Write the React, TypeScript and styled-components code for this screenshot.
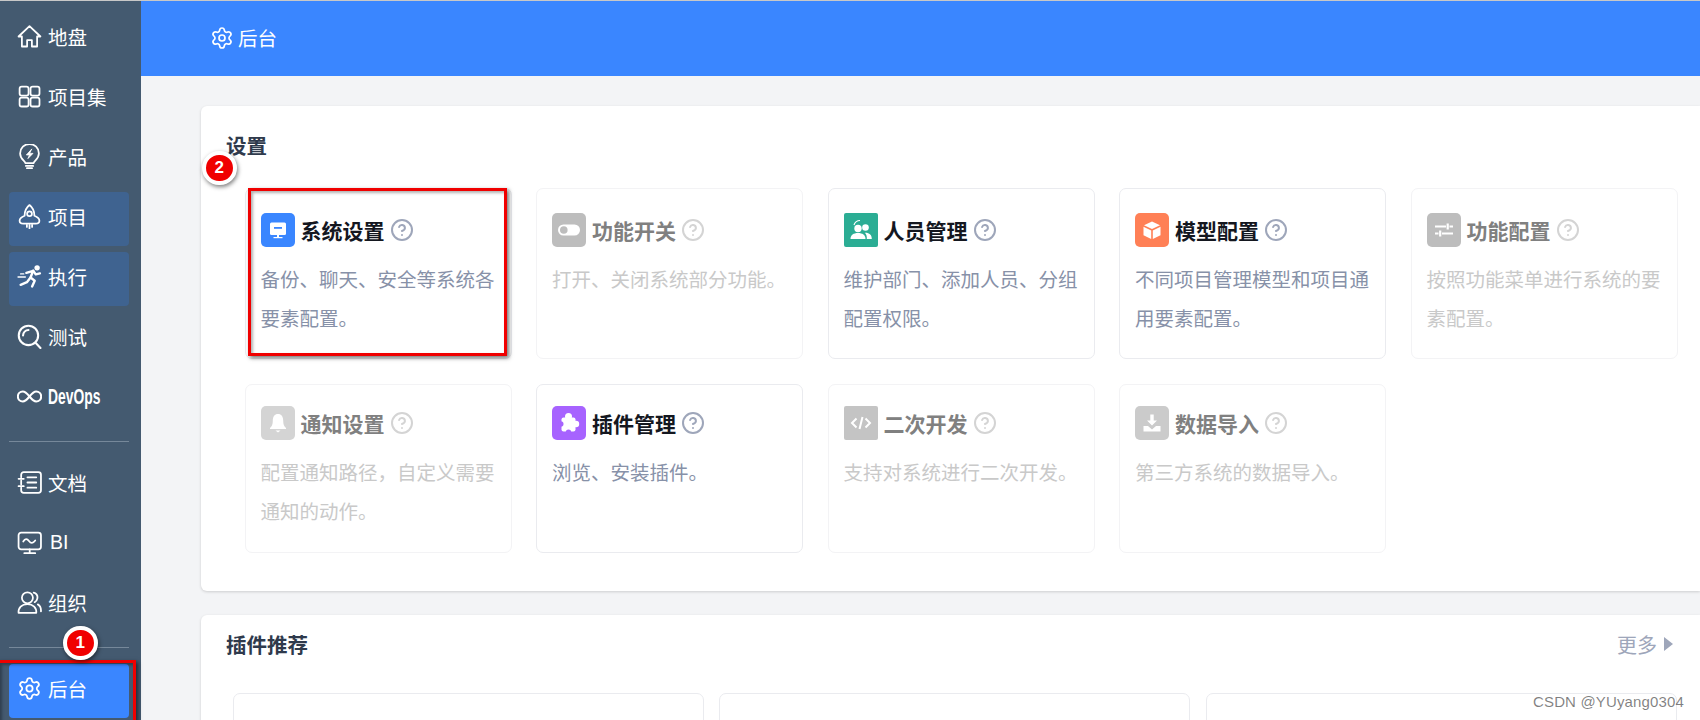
import React from "react";
import styled, { createGlobalStyle } from "styled-components";
import { Settings, CircleHelp } from "lucide-react";

const Global = createGlobalStyle`
  html, body { margin: 0; padding: 0; background: #fff; }
  * { box-sizing: border-box; }
  body { font-family: "Noto Sans CJK SC", "Liberation Sans", sans-serif; }
`;

const Page = styled.div`
  position: relative;
  display: flex;
  width: 1700px;
  height: 720px;
  overflow: hidden;
  border-top: 1px solid #c8c8c8;
`;

const Sidebar = styled.nav`
  flex: 0 0 141px;
  min-width: 0;
  display: flex;
  flex-direction: column;
  padding: 11px 12px 0 9px;
  background: #445a70;
`;

const NavGroup = styled.div`
  display: flex;
  flex-direction: column;
  gap: 6px;
`;

const NavItem = styled.div<{ $state?: "open" | "current" }>`
  display: flex;
  align-items: center;
  gap: 6px;
  height: 54px;
  padding: 0 0 5px 8px;
  border-radius: 4px;
  color: #fff;
  font-size: 19.5px;
  line-height: 1;
  background: ${(p) =>
    p.$state === "open" ? "#3f6390" : p.$state === "current" ? "#3a86ff" : "transparent"};
  svg { flex: none; }
`;

const NavLabel = styled.span<{ $latin?: "narrow" | "plain" }>`
  display: inline-block;
  font-family: ${(p) =>
    p.$latin ? '"Liberation Sans", sans-serif' : '"Noto Sans CJK SC", sans-serif'};
  font-weight: ${(p) => (p.$latin === "narrow" ? 700 : 400)};
  font-size: ${(p) => (p.$latin === "narrow" ? "22px" : "19.5px")};
  margin-left: ${(p) => (p.$latin === "plain" ? "2px" : "0")};
  transform: ${(p) => (p.$latin === "narrow" ? "scaleX(0.63)" : "none")};
  transform-origin: left center;
`;

const NavDivider = styled.div`
  height: 1px;
  margin: 15px 0 16px;
  background: #76889a;
`;

const Main = styled.main`
  flex: 1;
  min-width: 0;
  display: flex;
  flex-direction: column;
  background: #f3f4f6;
`;

const TopBar = styled.header`
  flex: 0 0 75px;
  display: flex;
  align-items: center;
  gap: 4px;
  padding: 0 0 2px 69px;
  background: #3a86ff;
  color: #fff;
  font-size: 19.5px;
`;

const Content = styled.div`
  display: flex;
  flex-direction: column;
  gap: 24px;
  padding: 30px 0 0 60px;
`;

const Panel = styled.section<{ $kind: "settings" | "plugins" }>`
  background: #fff;
  border-radius: 6px 0 0 6px;
  box-shadow: 0 1px 3px rgba(0, 0, 0, 0.16);
  height: ${(p) => (p.$kind === "settings" ? "485px" : "200px")};
  padding: ${(p) => (p.$kind === "settings" ? "23px 0 0 25px" : "13px 27px 0 25px")};
`;

const PanelTitle = styled.h2`
  margin: 0;
  font-size: 20.5px;
  line-height: 32px;
  font-weight: 700;
  color: #2f3a4c;
`;

const CardGrid = styled.div`
  display: grid;
  grid-template-columns: repeat(5, 267px);
  grid-template-rows: 171px 168.5px;
  column-gap: 24.5px;
  row-gap: 25px;
  margin: 27px 0 0 18.5px;
`;

const Card = styled.article<{ $off?: boolean }>`
  padding: 24px 6px 0 15px;
  border: 1px solid ${(p) => (p.$off ? "#f3f3f5" : "#eaebef")};
  border-radius: 7px;
  background: #fff;
  &:nth-child(n + 6) { padding-top: 21px; }
`;

const CardHead = styled.div`
  display: flex;
  align-items: center;
  height: 34px;
`;

const IconTile = styled.span<{ $bg: string; $square?: boolean }>`
  flex: none;
  display: flex;
  align-items: center;
  justify-content: center;
  width: 34px;
  height: 34px;
  border-radius: ${(p) => (p.$square ? "2px" : "5px")};
  background: ${(p) => p.$bg};
`;

const CardTitle = styled.h3<{ $off?: boolean }>`
  margin: 0 5px 0 6px;
  font-size: 21px;
  line-height: 34px;
  font-weight: 700;
  white-space: nowrap;
  color: ${(p) => (p.$off ? "#808080" : "#14171f")};
`;

const HelpMark = styled(CircleHelp)<{ $off?: boolean }>`
  flex: none;
  color: ${(p) => (p.$off ? "#d4d4d4" : "#9ea6ba")};
`;

const CardText = styled.p<{ $off?: boolean }>`
  margin: 12px 0 0;
  font-size: 19.5px;
  line-height: 39px;
  color: ${(p) => (p.$off ? "#c9c9c9" : "#8791a8")};
`;

const PluginHead = styled.div`
  display: flex;
  align-items: center;
  justify-content: space-between;
`;

const MoreLink = styled.span`
  display: flex;
  align-items: center;
  gap: 7px;
  font-size: 20px;
  color: #9ea6ba;
`;

const MoreArrow = styled.i`
  width: 0;
  height: 0;
  border-left: 9px solid #9ea6ba;
  border-top: 7.5px solid transparent;
  border-bottom: 7.5px solid transparent;
`;

const PluginRow = styled.div`
  display: grid;
  grid-template-columns: repeat(3, 471px);
  column-gap: 15.5px;
  margin: 33px 0 0 6.5px;
`;

const PluginCard = styled.div`
  height: 140px;
  border: 1px solid #eaebef;
  border-radius: 7px;
  background: #fff;
`;

const RedFrame = styled.div<{ $x: number; $y: number; $w: number; $h: number }>`
  position: absolute;
  left: ${(p) => p.$x}px;
  top: ${(p) => p.$y}px;
  width: ${(p) => p.$w}px;
  height: ${(p) => p.$h}px;
  border: 3px solid #f00000;
  box-shadow: 2px 2px 4px rgba(0, 0, 0, 0.55), inset 2px 2px 3px rgba(0, 0, 0, 0.3);
  pointer-events: none;
`;

const StepBadge = styled.div<{ $x: number; $y: number }>`
  position: absolute;
  left: ${(p) => p.$x - 17}px;
  top: ${(p) => p.$y - 17.5}px;
  width: 34.5px;
  height: 34.5px;
  display: flex;
  align-items: center;
  justify-content: center;
  border: 4px solid #fff;
  border-radius: 50%;
  background: #f00000;
  box-shadow: 1px 2px 4px rgba(0, 0, 0, 0.5);
  color: #fff;
  font: 700 17px/1 "Liberation Sans", sans-serif;
`;

const Watermark = styled.div`
  position: absolute;
  left: 1533px;
  top: 690px;
  font: 400 15px/22px "Liberation Sans", sans-serif;
  letter-spacing: 0.15px;
  color: rgba(0, 0, 0, 0.5);
  white-space: nowrap;
`;

const Line: React.FC<{ children: React.ReactNode; sw?: number }> = ({ children, sw = 1.7 }) => (
  <svg width="25" height="25" viewBox="0 0 24 24" fill="none" stroke="#fff" strokeWidth={sw} strokeLinecap="round" strokeLinejoin="round">
    {children}
  </svg>
);

const HouseIcon = () => (
  <Line><path d="M1.500 12 12 2l10.500 10h-3.200v9.600h-5V15.500H9.700v6.100h-5V12z" /></Line>
);
const GridIcon = () => (
  <Line>
    <rect x="2.500" y="2.500" width="8.600" height="8.600" rx="2" />
    <rect x="13" y="2.500" width="8.600" height="8.600" rx="2" />
    <rect x="2.500" y="13" width="8.600" height="8.600" rx="2" />
    <rect x="13" y="13" width="8.600" height="8.600" rx="2" />
  </Line>
);
const BulbIcon = () => (
  <Line>
    <path d="M8 18.300c0-2-5-3.800-5-9.300a9 9 0 0 1 18 0c0 5.500-5 7.300-5 9.300z" />
    <path d="M8.500 21h7M9.500 23.200h5" />
    <path d="M14 5 9 10.500h3l-1.500 3.500 4.800-5h-3z" fill="#fff" strokeWidth="0.8" />
  </Line>
);
const RocketIcon = () => (
  <Line>
    <path d="M12 1C8.800 3.500 7.300 7.300 7.300 11.300 4.800 12.300 2.500 14 2.500 16c0 1.700 1.500 2.800 3.500 2.800h12c2 0 3.500-1.100 3.500-2.800 0-2-2.300-3.700-4.800-4.700C16.700 7.300 15.200 3.500 12 1z" />
    <circle cx="12" cy="9.300" r="2.300" />
    <path d="M9.500 20v2M12 20v3.500M14.500 20v2" />
  </Line>
);
const RunnerIcon = () => (
  <Line sw={2.3}>
    <circle cx="19.300" cy="3.700" r="2.600" fill="#fff" stroke="none" />
    <path d="M9 8.500 15.500 6.500 13 13l4 3-2.500 5.500" />
    <path d="M13 13 9.500 17.500 3.500 20" />
    <path d="M15.500 6.500 18 10l4-1" />
    <path d="M1 12.500h7M3.500 9.500h3" strokeWidth="1.300" />
  </Line>
);
const SearchIcon = () => (
  <Line sw={2}>
    <circle cx="11" cy="11" r="9.300" />
    <path d="M5.800 11A5.200 5.200 0 0 1 11 5.800" />
    <path d="M17.800 18 22.500 23" />
  </Line>
);
const InfinityIcon = () => (
  <Line sw={2}>
    <path d="M12 12C9 8.300 7.500 7.200 5.600 7.200a4.800 4.800 0 0 0 0 9.600c1.900 0 3.400-1.100 6.400-4.800s4.500-4.800 6.400-4.800a4.800 4.800 0 0 1 0 9.600c-1.900 0-3.400-1.100-6.400-4.800z" />
  </Line>
);
const NotebookIcon = () => (
  <Line>
    <path d="M4 7V4.500A2.500 2.500 0 0 1 6.500 2h14A2.500 2.500 0 0 1 23 4.500v15a2.500 2.500 0 0 1-2.500 2.500h-14A2.500 2.500 0 0 1 4 19.500V17M4 10v4" />
    <path d="M1.500 8.500h5M1.500 15.500h5M10 7h8.500M10 12h8.500M10 17h8.500" />
  </Line>
);
const MonitorIcon = () => (
  <Line>
    <rect x="1.500" y="2.500" width="21.500" height="16" rx="2.500" />
    <path d="M6 11c1.800-3 3.700-3 5.500-.5s3.700 2.500 6-.5" />
    <path d="M12.200 18.500v3.500M7 22.300h10.500" />
  </Line>
);
const UsersIcon = () => (
  <Line>
    <circle cx="10" cy="7.500" r="5.300" />
    <path d="M1.500 22c-.5-5 3-8.500 8.500-8.500s9 3.500 8.500 8.500z" />
    <path d="M16 2.600c3 .9 4 3.300 3.500 5.600-.3 1.600-1.300 2.800-2.500 3.500M20 13.800c2 1.100 3.200 3.500 3 6.700" />
  </Line>
);

const TileGlyph: React.FC<{ children: React.ReactNode }> = ({ children }) => (
  <svg width="24" height="24" viewBox="0 0 24 24">{children}</svg>
);

const tiles: Record<string, React.ReactNode> = {
  monitor: (
    <TileGlyph>
      <rect x="4" y="4.500" width="16" height="12.500" rx="1.500" fill="#fff" />
      <rect x="8" y="9" width="8" height="1.800" fill="#3a86ff" />
      <rect x="11" y="17" width="2" height="2" fill="#fff" />
      <rect x="7.500" y="19" width="9" height="1.200" fill="#fff" />
    </TileGlyph>
  ),
  toggle: (
    <TileGlyph>
      <rect x="1" y="6.500" width="22" height="11" rx="5.500" fill="#fff" />
      <circle cx="6.800" cy="12" r="3.800" fill="#bdbdbd" />
    </TileGlyph>
  ),
  team: (
    <TileGlyph>
      <circle cx="9" cy="10.500" r="3.700" fill="#fff" />
      <path d="M1.500 21c0-4 3-6 7.500-6s7.500 2 7.500 6z" fill="#fff" />
      <circle cx="16.500" cy="9.500" r="3.300" fill="#fff" />
      <path d="M17.800 21h5c.2-4-2.500-6.500-7-6.300 1.700 1.500 2.200 3.700 2 6.300z" fill="#fff" />
      <path d="M5 7c1-3 3.500-4.500 6-4.500" stroke="#fff" strokeWidth="1.200" fill="none" />
    </TileGlyph>
  ),
  cube: (
    <TileGlyph>
      <path d="M12 3.500 20 7.300 12 11 4 7.300z" fill="#fff" />
      <path d="M3.500 8.800 11.200 12.400V21L3.500 17.300z" fill="#fff" />
      <path d="M20.500 8.800 12.800 12.400V21l7.700-3.700z" fill="#fff" />
    </TileGlyph>
  ),
  sliders: (
    <TileGlyph>
      <path d="M3 8.500h11M17.500 8.500H21M3 15.500h3.500M10 15.500h11" stroke="#fff" strokeWidth="1.800" fill="none" />
      <path d="M15.700 5.500v6M8.200 12.500v6" stroke="#fff" strokeWidth="2.200" fill="none" />
    </TileGlyph>
  ),
  bell: (
    <TileGlyph>
      <path d="M12 3c3.300 0 5.200 2.700 5.200 6.500 0 4 1 6 2.800 7.500v1H4v-1c1.800-1.500 2.800-3.500 2.800-7.500C6.800 5.700 8.700 3 12 3z" fill="#fff" />
      <path d="M9.500 19.500h5L12 21.500z" fill="#fff" />
    </TileGlyph>
  ),
  puzzle: (
    <TileGlyph>
      <rect x="4.500" y="6.500" width="14" height="14" rx="2" fill="#fff" />
      <circle cx="11.500" cy="5.500" r="3.500" fill="#fff" />
      <circle cx="19" cy="13" r="3.200" fill="#fff" />
      <circle cx="3.800" cy="13" r="2.700" fill="#a763ff" />
      <circle cx="11.500" cy="21.200" r="2.700" fill="#a763ff" />
    </TileGlyph>
  ),
  code: (
    <TileGlyph>
      <path d="M7.500 7.500 3 12l4.500 4.500M16.500 7.500 21 12l-4.500 4.500M13.500 6l-3 12" stroke="#fff" strokeWidth="2" fill="none" />
    </TileGlyph>
  ),
  download: (
    <TileGlyph>
      <path d="M10.300 3.500h3.400v6H17l-5 5-5-5h3.300z" fill="#fff" />
      <path d="M3.500 15H8l4 3.500 4-3.500h4.500v5.500h-17z" fill="#fff" />
    </TileGlyph>
  ),
};

type CardData = {
  tile: string;
  bg: string;
  title: string;
  text: string;
  off?: boolean;
  square?: boolean;
};

const cards: CardData[] = [
  { tile: "monitor", bg: "#3a86ff", title: "系统设置", text: "备份、聊天、安全等系统各要素配置。" },
  { tile: "toggle", bg: "#bdbdbd", title: "功能开关", text: "打开、关闭系统部分功能。", off: true },
  { tile: "team", bg: "#2bad94", title: "人员管理", text: "维护部门、添加人员、分组配置权限。", square: true },
  { tile: "cube", bg: "#ff8056", title: "模型配置", text: "不同项目管理模型和项目通用要素配置。" },
  { tile: "sliders", bg: "#bdbdbd", title: "功能配置", text: "按照功能菜单进行系统的要素配置。", off: true },
  { tile: "bell", bg: "#d4d4d4", title: "通知设置", text: "配置通知路径，自定义需要通知的动作。", off: true },
  { tile: "puzzle", bg: "#a763ff", title: "插件管理", text: "浏览、安装插件。" },
  { tile: "code", bg: "#c4c4c4", title: "二次开发", text: "支持对系统进行二次开发。", off: true, square: true },
  { tile: "download", bg: "#cbcbcb", title: "数据导入", text: "第三方系统的数据导入。", off: true },
];

export default function App() {
  return (
    <Page>
      <Global />
      <Sidebar>
        <NavGroup>
          <NavItem><HouseIcon /><NavLabel>地盘</NavLabel></NavItem>
          <NavItem><GridIcon /><NavLabel>项目集</NavLabel></NavItem>
          <NavItem><BulbIcon /><NavLabel>产品</NavLabel></NavItem>
          <NavItem $state="open"><RocketIcon /><NavLabel>项目</NavLabel></NavItem>
          <NavItem $state="open"><RunnerIcon /><NavLabel>执行</NavLabel></NavItem>
          <NavItem><SearchIcon /><NavLabel>测试</NavLabel></NavItem>
          <NavItem><InfinityIcon /><NavLabel $latin="narrow">DevOps</NavLabel></NavItem>
        </NavGroup>
        <NavDivider />
        <NavGroup>
          <NavItem><NotebookIcon /><NavLabel>文档</NavLabel></NavItem>
          <NavItem><MonitorIcon /><NavLabel $latin="plain">BI</NavLabel></NavItem>
          <NavItem><UsersIcon /><NavLabel>组织</NavLabel></NavItem>
        </NavGroup>
        <NavDivider />
        <NavItem $state="current">
          <Settings size={25} color="#fff" strokeWidth={1.7} />
          <NavLabel>后台</NavLabel>
        </NavItem>
      </Sidebar>
      <Main>
        <TopBar>
          <Settings size={24} color="#fff" strokeWidth={1.7} />
          后台
        </TopBar>
        <Content>
          <Panel $kind="settings">
            <PanelTitle>设置</PanelTitle>
            <CardGrid>
              {cards.map((c) => (
                <Card key={c.title} $off={c.off}>
                  <CardHead>
                    <IconTile $bg={c.bg} $square={c.square}>{tiles[c.tile]}</IconTile>
                    <CardTitle $off={c.off}>{c.title}</CardTitle>
                    <HelpMark size={24} strokeWidth={2} $off={c.off} />
                  </CardHead>
                  <CardText $off={c.off}>{c.text}</CardText>
                </Card>
              ))}
            </CardGrid>
          </Panel>
          <Panel $kind="plugins">
            <PluginHead>
              <PanelTitle>插件推荐</PanelTitle>
              <MoreLink>更多<MoreArrow /></MoreLink>
            </PluginHead>
            <PluginRow>
              <PluginCard />
              <PluginCard />
              <PluginCard />
            </PluginRow>
          </Panel>
        </Content>
      </Main>
      <RedFrame $x={-3} $y={659} $w={139} $h={70} />
      <RedFrame $x={248} $y={187} $w={259} $h={168} />
      <StepBadge $x={80} $y={642}>1</StepBadge>
      <StepBadge $x={219} $y={167}>2</StepBadge>
      <Watermark>CSDN @YUyang0304</Watermark>
    </Page>
  );
}
